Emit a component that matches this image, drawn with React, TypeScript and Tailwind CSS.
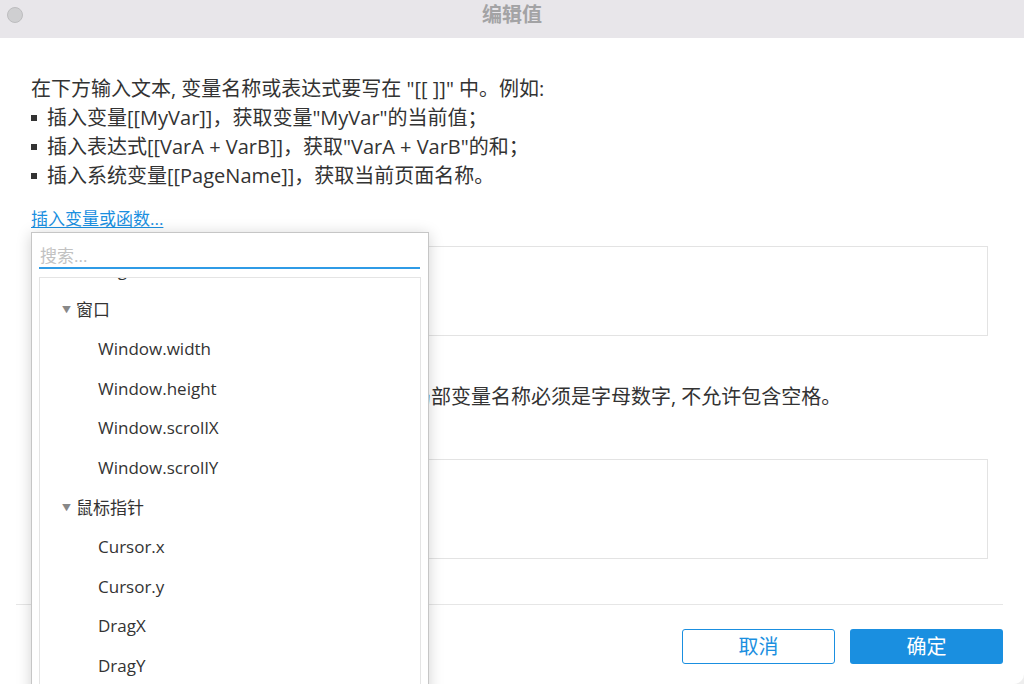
import { useState } from 'react';

const FONT = "font-['Open_Sans','Noto_Sans_CJK_SC',sans-serif]";

const EXAMPLES = [
  '插入变量[[MyVar]]，获取变量"MyVar"的当前值；',
  '插入表达式[[VarA + VarB]]，获取"VarA + VarB"的和；',
  '插入系统变量[[PageName]]，获取当前页面名称。',
];

type TreeRow = { label: string; group?: boolean };

const TREE: TreeRow[] = [
  { label: 'PageName' },
  { label: '窗口', group: true },
  { label: 'Window.width' },
  { label: 'Window.height' },
  { label: 'Window.scrollX' },
  { label: 'Window.scrollY' },
  { label: '鼠标指针', group: true },
  { label: 'Cursor.x' },
  { label: 'Cursor.y' },
  { label: 'DragX' },
  { label: 'DragY' },
  { label: 'DragTime' },
];

function VariablePicker() {
  const [query, setQuery] = useState('');
  return (
    <div className="absolute left-[31px] top-[232px] w-[398px] h-[470px] bg-white border border-[#c6c6c6] shadow-[0_2px_14px_rgba(0,0,0,0.18)] px-[7px] pt-[10px]">
      <input
        value={query}
        onChange={(e) => setQuery(e.target.value)}
        placeholder="搜索..."
        className="block w-[381px] h-[26px] border-b-2 border-[#2f9be6] text-[17px] text-[#333] placeholder:text-[#c2c2c2] outline-none pl-[1px]"
      />
      <div className="mt-[8px] w-[382px] h-[420px] border border-[#e4e4e4] overflow-hidden">
        <div className="-mt-[28px]">
          {TREE.map((row) => (
            <div
              key={row.label}
              className={`h-[39.6px] flex items-center text-[17px] text-[#333] ${row.group ? 'pl-[22px]' : 'pl-[58px]'}`}
            >
              {row.group && (
                <span className="mr-[5px] text-[9px] text-[#888] leading-none">▼</span>
              )}
              {row.label}
            </div>
          ))}
        </div>
      </div>
    </div>
  );
}

export default function App() {
  return (
    <div className={`${FONT} w-[1024px] h-[684px] bg-[#eeeeee] overflow-hidden`}>
      <div className="relative w-[1024px] h-[684px] bg-white rounded-br-[10px] overflow-hidden">
        {/* title bar */}
        <div className="h-[38px] bg-[#e8e6ea] flex items-center justify-center relative">
          <span className="absolute left-[7px] top-[7px] w-[16px] h-[16px] rounded-full bg-[#cfcfd1] border border-[#bdbdbf]" />
          <span className="text-[20px] font-bold text-[#a3a3a5] -mt-[8px]">编辑值</span>
        </div>

        <div className="pl-[31px] pr-[36px] pt-[36px]">
          <p className="text-[20px] leading-[29px] text-[#333]">
            在下方输入文本, 变量名称或表达式要写在 "[[ ]]" 中。例如:
          </p>
          {EXAMPLES.map((line) => (
            <p key={line} className="text-[20px] leading-[29px] text-[#333] flex items-center">
              <span className="inline-block w-[6px] h-[6px] bg-[#333] mr-[10px]" />
              {line}
            </p>
          ))}

          <a className="block mt-[17px] text-[17px] leading-[24px] text-[#1a8fe0] underline underline-offset-2 w-fit">
            插入变量或函数...
          </a>

          <div className="mt-[15px] h-[90px] border border-[#e3e3e3]" />

          <p className="mt-[46px] text-[20px] leading-[29px] text-[#333] whitespace-nowrap">
            在下方创建用于插入元件值的局部变量，该局部变量名称必须是字母数字, 不允许包含空格。
          </p>

          <div className="mt-[48px] h-[100px] border border-[#e3e3e3]" />
        </div>

        <div className="mt-[45px] ml-[16px] mr-[21px] h-px bg-[#e6e6e6]" />

        <div className="mt-[24px] mr-[21px] flex justify-end gap-[15px]">
          <button className="w-[153px] h-[35px] rounded-[3px] border border-[#1a8fe0] bg-white text-[20px] text-[#1a8fe0]">
            取消
          </button>
          <button className="w-[153px] h-[35px] rounded-[3px] bg-[#1a8fe0] text-[20px] text-white">
            确定
          </button>
        </div>

        <VariablePicker />
      </div>
    </div>
  );
}
